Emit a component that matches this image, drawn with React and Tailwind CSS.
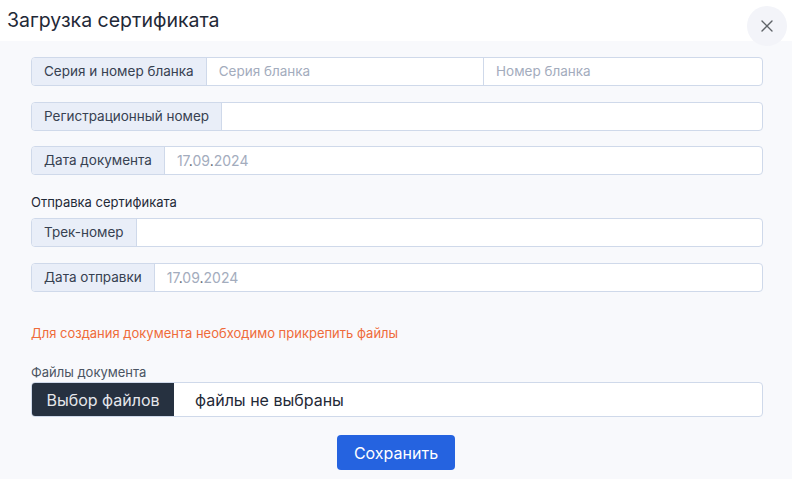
import { X } from "lucide-react";

const font = { fontFamily: "Inter, 'Noto Sans', sans-serif" };

function DateText() {
  return (
    <span className="text-[#a3acbd] text-[14px]">
      17<span className="text-[#4b5563]">.</span>09<span className="text-[#4b5563]">.</span>2024
    </span>
  );
}

function Row({ label, children }) {
  return (
    <div className="flex h-[29px] rounded-[4px] border border-[#cfd9ea] bg-white text-[13.5px] overflow-hidden">
      <div className="flex items-center px-3 bg-[#e9eef8] border-r border-[#cfd9ea] text-[#374151] whitespace-nowrap">
        {label}
      </div>
      {children}
    </div>
  );
}

export default function App() {
  return (
    <div className="relative w-[792px] h-[479px] bg-[#f8f9fc] flex flex-col overflow-hidden" style={font}>
      {/* Header */}
      <div className="h-[41px] bg-white flex items-center px-[7px] shrink-0">
        <h1 className="text-[19.5px] text-[#1f2937] leading-none">Загрузка сертификата</h1>
      </div>
      <button className="absolute top-[6px] left-[747px] w-[40px] h-[40px] rounded-full bg-[#f3f4f9] flex items-center justify-center text-[#5f6368]">
        <X size={20} strokeWidth={1.6} />
      </button>

      {/* Body */}
      <div className="flex flex-col pl-[31px] pr-[29px] pt-[16px]">
        <Row label="Серия и номер бланка">
          <div className="flex-1 flex items-center px-3 text-[#a3acbd] border-r border-[#cfd9ea]">Серия бланка</div>
          <div className="w-[278px] flex items-center px-3 text-[#a3acbd]">Номер бланка</div>
        </Row>
        <div className="mt-[16px]">
          <Row label="Регистрационный номер">
            <div className="flex-1" />
          </Row>
        </div>
        <div className="mt-[15px]">
          <Row label="Дата документа">
            <div className="flex-1 flex items-center px-3"><DateText /></div>
          </Row>
        </div>
        <div className="mt-[19px] text-[13px] text-[#1f2937] leading-[16px]">Отправка сертификата</div>
        <div className="mt-[8px]">
          <Row label="Трек-номер">
            <div className="flex-1" />
          </Row>
        </div>
        <div className="mt-[16px]">
          <Row label="Дата отправки">
            <div className="flex-1 flex items-center px-3"><DateText /></div>
          </Row>
        </div>
        <div className="mt-[33px] text-[13px] text-[#ef6b3a] leading-[16px]">
          Для создания документа необходимо прикрепить файлы
        </div>
        <div className="mt-[23px] text-[13px] text-[#4b5563] leading-[16px]">Файлы документа</div>
        <div className="mt-[2px] flex h-[35px] rounded-[4px] border border-[#cfd9ea] bg-white overflow-hidden text-[16px]">
          <div className="w-[142px] bg-[#263140] text-[#e5e7eb] flex items-center justify-center">Выбор файлов</div>
          <div className="flex-1 flex items-center pl-[21px] text-[#1f2937]">файлы не выбраны</div>
        </div>
        <div className="mt-[18px] flex justify-center pr-[2px]">
          <button className="w-[118px] h-[35px] rounded-[4px] bg-[#2563e0] text-white text-[16px]">Сохранить</button>
        </div>
      </div>
    </div>
  );
}
